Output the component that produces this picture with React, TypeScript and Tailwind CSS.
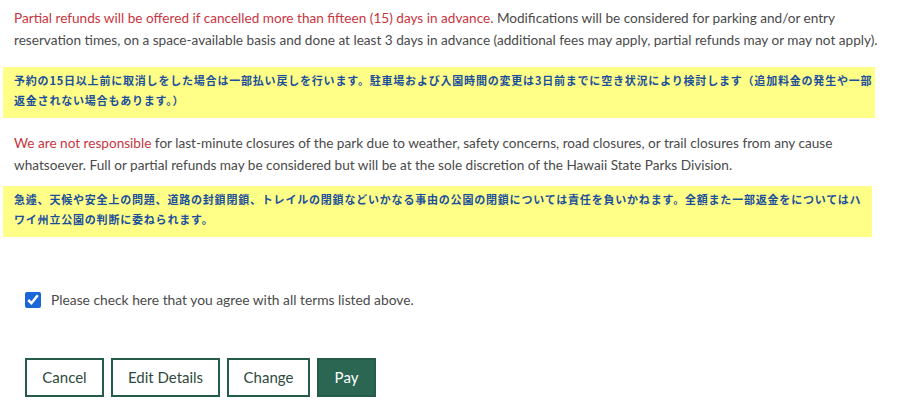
import React, { useState } from 'react';

const RED = 'text-[#c8363f]';

export default function App() {
  const [agreed, setAgreed] = useState(true);

  return (
    <div className="w-[900px] h-[419px] bg-white overflow-hidden font-['Lato','Noto_Sans',sans-serif]">
      <p className="w-[895px] pl-[14px] pt-[7px] text-[13.6px] leading-[22px] text-[#4a4a4a]">
        <span className={RED}>Partial refunds will be offered if cancelled more than fifteen (15) days in advance.</span>{' '}
        Modifications will be considered for parking and/or entry
        <br />
        reservation times, on a space-available basis and done at least 3 days in advance (additional fees may apply, partial refunds may or may not apply).
      </p>

      <div className="mt-[16px] ml-[3px] w-[872px] h-[51px] bg-[#ffff88] pl-[11px] pt-[3px] text-[11px] leading-[20px] font-bold tracking-[0.8px] text-[#1b4f9c] font-['Noto_Sans_CJK_JP',sans-serif]">
        予約の15日以上前に取消しをした場合は一部払い戻しを行います。駐車場および入園時間の変更は3日前までに空き状況により検討します（追加料金の発生や一部返金されない場合もあります。）
      </div>

      <p className="w-[895px] pl-[14px] mt-[14px] text-[13.6px] leading-[22px] text-[#4a4a4a]">
        <span className={RED}>We are not responsible</span> for last-minute closures of the park due to weather, safety concerns, road closures, or trail closures from any cause
        <br />
        whatsoever. Full or partial refunds may be considered but will be at the sole discretion of the Hawaii State Parks Division.
      </p>

      <div className="mt-[10px] ml-[3px] w-[869px] h-[51px] bg-[#ffff88] pl-[11px] pt-[3px] text-[11px] leading-[20px] font-bold tracking-[0.8px] text-[#1b4f9c] font-['Noto_Sans_CJK_JP',sans-serif]">
        急遽、天候や安全上の問題、道路の封鎖閉鎖、トレイルの閉鎖などいかなる事由の公園の閉鎖については責任を負いかねます。全額また一部返金をについてはハワイ州立公園の判断に委ねられます。
      </div>

      <label className="mt-[53px] ml-[25px] flex items-center gap-[10px] text-[13.8px] text-[#4a4a4a]">
        <input
          type="checkbox"
          checked={agreed}
          onChange={() => setAgreed(!agreed)}
          className="w-[16px] h-[16px] m-0 accent-[#1a66d9]"
        />
        Please check here that you agree with all terms listed above.
      </label>

      <div className="mt-[47px] ml-[25px] flex gap-[7px]">
        <button className="w-[79px] h-[39px] border-2 border-[#245c48] text-[15px] text-[#2e4a40]">Cancel</button>
        <button className="w-[109px] h-[39px] border-2 border-[#245c48] text-[15px] text-[#2e4a40]">Edit Details</button>
        <button className="w-[83px] h-[39px] border-2 border-[#245c48] text-[15px] text-[#2e4a40]">Change</button>
        <button className="w-[59px] h-[39px] border-2 border-[#245c48] bg-[#2a6652] text-[15px] text-white">Pay</button>
      </div>
    </div>
  );
}
